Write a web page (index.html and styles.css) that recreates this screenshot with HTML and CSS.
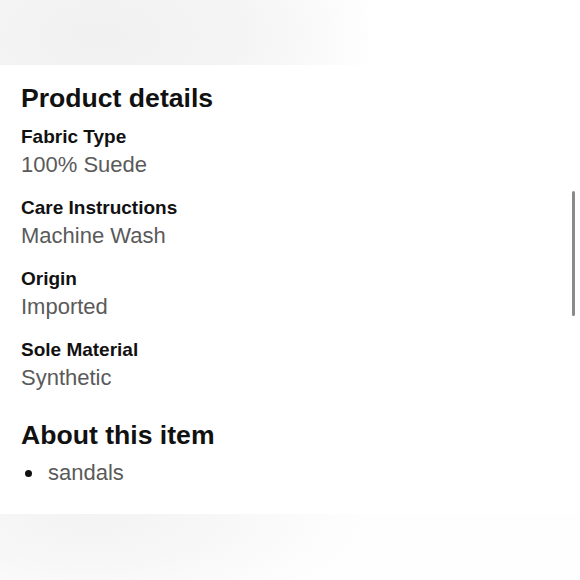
FILE: index.html
```html
<!DOCTYPE html>
<html>
<head>
<meta charset="utf-8">
<link rel="stylesheet" href="styles.css">
</head>
<body>
<div class="band band-top"></div>
<main class="content">
  <h2 class="heading">Product details</h2>
  <div class="details">
    <div class="detail">
      <div class="label">Fabric Type</div>
      <div class="value">100% Suede</div>
    </div>
    <div class="detail">
      <div class="label">Care Instructions</div>
      <div class="value">Machine Wash</div>
    </div>
    <div class="detail">
      <div class="label">Origin</div>
      <div class="value">Imported</div>
    </div>
    <div class="detail">
      <div class="label">Sole Material</div>
      <div class="value">Synthetic</div>
    </div>
  </div>
  <h2 class="heading about">About this item</h2>
  <ul class="bullets">
    <li>sandals</li>
  </ul>
</main>
<div class="band band-bottom"></div>
<div class="scrollbar"></div>
</body>
</html>
```
FILE: styles.css
```css
html, body {
  margin: 0;
  padding: 0;
  background: #ffffff;
  width: 580px;
  height: 580px;
  overflow: hidden;
}
body {
  font-family: "Liberation Sans", Arial, sans-serif;
  position: relative;
}
.band {
  width: 100%;
}
.band-top {
  height: 65px;
  background: radial-gradient(ellipse 280px 150px at 100px 35px, #f1f1f1 0%, #f4f4f4 50%, #fafafa 80%, #ffffff 100%);
}
.band-bottom {
  height: 66px;
  background: radial-gradient(ellipse 280px 110px at 90px 0px, #f3f3f3 0%, #f7f7f7 45%, #fbfbfb 75%, #fefefe 100%);
}
.content {
  padding: 17px 21px 25px 21px;
  height: 449px;
  box-sizing: border-box;
}
.heading {
  margin: 0;
  font-size: 26.6px;
  line-height: 32px;
  font-weight: 700;
  color: #111111;
}
.details {
  margin-top: 10.6px;
  display: flex;
  flex-direction: column;
  gap: 15px;
}
.label {
  font-size: 19px;
  line-height: 24px;
  font-weight: 700;
  color: #111111;
}
.value {
  font-size: 22px;
  line-height: 32px;
  color: #5a5a5a;
}
.about {
  margin-top: 25.4px;
}
.bullets {
  margin: 5.6px 0 0 0;
  padding: 0;
  list-style: none;
}
.bullets li {
  display: flex;
  align-items: center;
  font-size: 22px;
  line-height: 32px;
  color: #5a5a5a;
}
.bullets li::before {
  content: "";
  width: 7px;
  height: 7px;
  border-radius: 50%;
  background: #111111;
  margin: 2px 16px 0 4px;
}
.scrollbar {
  position: absolute;
  left: 572px;
  top: 191px;
  width: 3px;
  height: 125px;
  border-radius: 2px;
  background: #8a8a8a;
}
```
